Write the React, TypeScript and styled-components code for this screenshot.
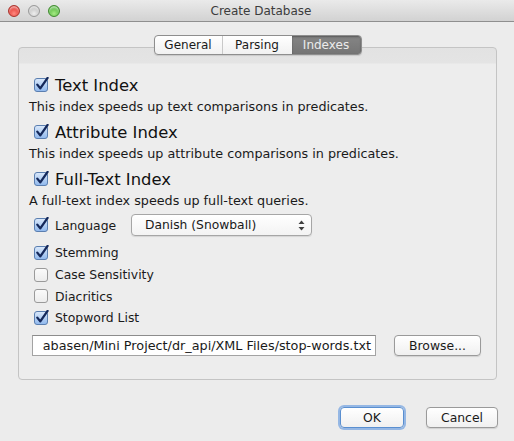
import React, { useId } from "react";
import styled, { createGlobalStyle } from "styled-components";

const Global = createGlobalStyle`
  html, body { margin: 0; padding: 0; background: #ececec; }
  body { font-family: "DejaVu Sans", "Liberation Sans", sans-serif; color: #111; }
`;

const Window = styled.div`
  width: 514px;
  height: 441px;
  display: flex;
  flex-direction: column;
  background: #ececec;
  overflow: hidden;
`;

const TitleBar = styled.div`
  height: 21px;
  flex: none;
  display: flex;
  align-items: center;
  background: linear-gradient(#eaeaea, #d2d2d2);
  border-bottom: 1px solid #8f8f8f;
`;

const Lights = styled.div`
  display: flex;
  gap: 8px;
  padding-left: 8px;
  align-items: center;
`;

const Light = styled.div<{ $c1: string; $c2: string; $b: string }>`
  width: 12px;
  height: 12px;
  border-radius: 50%;
  box-sizing: border-box;
  border: 1px solid ${(p) => p.$b};
  background: radial-gradient(circle at 50% 75%, ${(p) => p.$c1} 0%, ${(p) => p.$c2} 75%);
  box-shadow: inset 0 2px 2px rgba(255,255,255,0.55);
`;

const Title = styled.div`
  flex: 1;
  text-align: center;
  font-size: 12px;
  color: #3c3c3c;
  margin-left: -52px;
  padding-top: 1px;
`;

const Body = styled.div`
  display: flex;
  flex-direction: column;
  flex: 1;
`;

const TabRow = styled.div`
  display: flex;
  justify-content: center;
  margin-top: 13px;
  position: relative;
  z-index: 1;
  padding-left: 1px;
`;

const Segmented = styled.div`
  display: flex;
  height: 20px;
  box-sizing: border-box;
  border: 1px solid #8e8e8e;
  border-radius: 4px;
  overflow: hidden;
  background: linear-gradient(#ffffff, #f1f1f1);
  box-shadow: 0 1px 1px rgba(0,0,0,0.12);
`;

const Seg = styled.div<{ $w: number; $sel?: boolean; $div?: boolean }>`
  width: ${(p) => p.$w}px;
  display: flex;
  align-items: center;
  justify-content: center;
  font-size: 12px;
  color: ${(p) => (p.$sel ? "#ececec" : "#1a1a1a")};
  background: ${(p) => (p.$sel ? "linear-gradient(#858585, #757575)" : "transparent")};
  box-shadow: ${(p) => (p.$sel ? "inset 0 1px 2px rgba(0,0,0,0.35)" : "none")};
  border-right: ${(p) => (p.$div ? "1px solid #c9c9c9" : "none")};
`;

const Panel = styled.div`
  margin: -8px 17px 0 18px;
  box-sizing: border-box;
  height: 333px;
  border: 1px solid #c4c4c4;
  border-radius: 4px;
  background: linear-gradient(#e2e2e2 0px, #e4e4e4 15px, #ededed 16px, #ededed 100%);
  padding: 26px 10px 0 10px;
  display: flex;
  flex-direction: column;
`;

const Group = styled.div<{ $mb: number }>`
  display: flex;
  flex-direction: column;
  margin-bottom: ${(p) => p.$mb}px;
`;

const Row = styled.div<{ $h: number }>`
  height: ${(p) => p.$h}px;
  flex: none;
  display: flex;
  align-items: center;
  padding-left: 5px;
`;

const Spacer = styled.div<{ $h: number }>`
  height: ${(p) => p.$h}px;
  flex: none;
`;

const Heading = styled.span`
  font-size: 16.4px;
  margin-left: 5px;
  color: #111;
`;

const Desc = styled.div`
  height: 20px;
  display: flex;
  align-items: center;
  font-size: 12.75px;
  color: #1a1a1a;
`;

const Label = styled.span<{ $w?: number }>`
  font-size: 12.4px;
  margin-left: 5px;
  color: #1a1a1a;
  ${(p) => (p.$w ? `width: ${p.$w}px;` : "")}
`;

const Popup = styled.div`
  width: 181px;
  height: 22px;
  box-sizing: border-box;
  border: 1px solid #a6a6a6;
  border-radius: 4px;
  background: linear-gradient(#ffffff, #f3f3f3);
  box-shadow: 0 1px 1px rgba(0,0,0,0.1);
  display: flex;
  align-items: center;
  justify-content: space-between;
  padding: 0 6px 0 13px;
  font-size: 12.3px;
  color: #1a1a1a;
`;

const FileRow = styled.div`
  display: flex;
  align-items: center;
  margin-top: 6px;
  padding-left: 3px;
`;

const Field = styled.div`
  width: 344px;
  height: 21px;
  box-sizing: border-box;
  border: 1px solid #a3a3a3;
  border-top-color: #8c8c8c;
  background: #fff;
  display: flex;
  align-items: center;
  justify-content: flex-end;
  overflow: hidden;
  white-space: nowrap;
  padding-right: 4px;
  font-size: 12.8px;
  color: #1a1a1a;
`;

const Button = styled.div<{ $w: number; $focus?: boolean }>`
  width: ${(p) => p.$w}px;
  height: 21px;
  box-sizing: border-box;
  border: 1px solid ${(p) => (p.$focus ? "#5a8fd0" : "#9a9a9a")};
  border-radius: 4px;
  background: linear-gradient(#ffffff, #f0f0f0);
  box-shadow: ${(p) =>
    p.$focus ? "0 0 0 2px rgba(120,165,225,0.75)" : "0 1px 1px rgba(0,0,0,0.12)"};
  display: flex;
  align-items: center;
  justify-content: center;
  font-size: 12.4px;
  color: #1a1a1a;
`;

const BrowseBtn = styled(Button)`
  margin-left: 18px;
`;

const Footer = styled.div`
  display: flex;
  justify-content: flex-end;
  align-items: center;
  gap: 22px;
  padding-right: 16px;
  margin-top: 27px;
`;

function Check({ on }: { on: boolean }) {
  const id = useId().replace(/:/g, "");
  return (
    <svg width="16" height="16" viewBox="0 0 16 16" style={{ flex: "none" }}>
      <defs>
        <linearGradient id={`g${id}`} x1="0" y1="0" x2="0" y2="1">
          {on ? (
            <>
              <stop offset="0" stopColor="#dbe9fb" />
              <stop offset="0.5" stopColor="#b5d0f3" />
              <stop offset="1" stopColor="#8fb8ee" />
            </>
          ) : (
            <>
              <stop offset="0" stopColor="#fbfbfb" />
              <stop offset="1" stopColor="#ececec" />
            </>
          )}
        </linearGradient>
      </defs>
      <rect
        x="0.5"
        y="1.5"
        width="13"
        height="13"
        rx="2.5"
        fill={`url(#g${id})`}
        stroke={on ? "#5b7fb0" : "#9a9a9a"}
      />
      {on && (
        <path
          d="M3.3 7.6 L6.3 11.4 L13.6 0.9"
          fill="none"
          stroke="#14285a"
          strokeWidth="2.3"
          strokeLinecap="round"
          strokeLinejoin="round"
        />
      )}
    </svg>
  );
}

function Arrows() {
  return (
    <svg width="7" height="11" viewBox="0 0 7 11">
      <path d="M3.5 0.5 L6.5 4 L0.5 4 Z" fill="#404040" />
      <path d="M3.5 10.5 L6.5 7 L0.5 7 Z" fill="#404040" />
    </svg>
  );
}

const groups = [
  { title: "Text Index", desc: "This index speeds up text comparisons in predicates.", mb: 5 },
  { title: "Attribute Index", desc: "This index speeds up attribute comparisons in predicates.", mb: 5 },
  { title: "Full-Text Index", desc: "A full-text index speeds up full-text queries.", mb: 4 },
];

const options = [
  { label: "Stemming", on: true },
  { label: "Case Sensitivity", on: false },
  { label: "Diacritics", on: false },
  { label: "Stopword List", on: true },
];

export default function App() {
  return (
    <>
      <Global />
      <Window>
        <TitleBar>
          <Lights>
            <Light $c1="#ff8a80" $c2="#e0322c" $b="#a8332c" />
            <Light $c1="#eeeeee" $c2="#bdbdbd" $b="#9a9a9a" />
            <Light $c1="#a6ea84" $c2="#4fb43a" $b="#3f8a2e" />
          </Lights>
          <Title>Create Database</Title>
        </TitleBar>
        <Body>
          <TabRow>
            <Segmented>
              <Seg $w={67} $div>General</Seg>
              <Seg $w={69}>Parsing</Seg>
              <Seg $w={69} $sel>Indexes</Seg>
            </Segmented>
          </TabRow>
          <Panel>
            {groups.map((g) => (
              <Group key={g.title} $mb={g.mb}>
                <Row $h={22}>
                  <Check on />
                  <Heading>{g.title}</Heading>
                </Row>
                <Desc>{g.desc}</Desc>
              </Group>
            ))}
            <Row $h={22}>
              <Check on />
              <Label $w={76}>Language</Label>
              <Popup>
                <span>Danish (Snowball)</span>
                <Arrows />
              </Popup>
            </Row>
            <Spacer $h={6} />
            {options.map((o) => (
              <Row $h={21.7} key={o.label}>
                <Check on={o.on} />
                <Label>{o.label}</Label>
              </Row>
            ))}
            <FileRow>
              <Field>
                <span>abasen/Mini Project/dr_api/XML Files/stop-words.txt</span>
              </Field>
              <BrowseBtn $w={87}>Browse...</BrowseBtn>
            </FileRow>
          </Panel>
          <Footer>
            <Button $w={64} $focus>OK</Button>
            <Button $w={72}>Cancel</Button>
          </Footer>
        </Body>
      </Window>
    </>
  );
}
